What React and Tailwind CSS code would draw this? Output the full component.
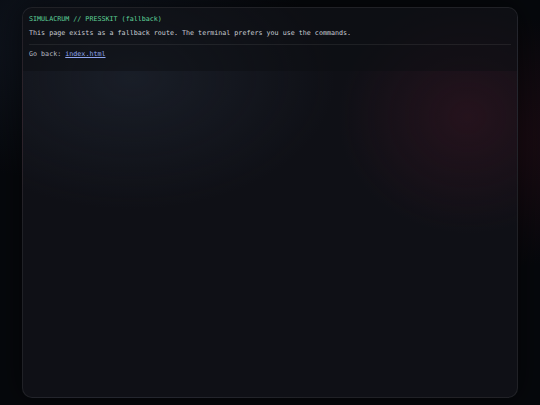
import React from 'react';

const mono = { fontFamily: '"DejaVu Sans Mono", "Liberation Mono", monospace' };

export default function App() {
  return (
    <div
      className="w-full h-[405px] overflow-hidden bg-[#06080c] bg-[radial-gradient(ellipse_60%_50%_at_15%_10%,rgba(40,55,80,0.3),transparent_70%),radial-gradient(ellipse_40%_45%_at_92%_35%,rgba(80,20,35,0.3),transparent_70%)] px-[22px] py-[7px]"
      style={mono}
    >
      <div className="h-[391px] rounded-[10px] border border-white/[0.07] overflow-hidden bg-[#0f1016] bg-[radial-gradient(ellipse_55%_45%_at_22%_18%,rgba(40,50,65,0.4),transparent_75%),radial-gradient(ellipse_35%_40%_at_90%_28%,rgba(70,22,38,0.4),transparent_75%)] shadow-[0_0_30px_rgba(0,0,0,0.6)]">
        <div className="bg-[#0c0d12]/50 px-[6px] pt-[5px] pb-[11px] antialiased">
          <p className="text-[6.7px] leading-[12px] text-[#5fd49a]">SIMULACRUM // PRESSKIT (fallback)</p>
          <p className="mt-[2px] text-[6.7px] leading-[12px] text-[#c8ccd3]">
            This page exists as a fallback route. The terminal prefers you use the commands.
          </p>
          <div className="mt-[5px] border-t border-white/[0.07]" />
          <p className="pt-[3px] text-[6.7px] leading-[12px] text-[#b4b8c0]">
            Go back:{' '}
            <a href="#" className="text-[#8fa6f0] underline">index.html</a>
          </p>
        </div>
      </div>
    </div>
  );
}
